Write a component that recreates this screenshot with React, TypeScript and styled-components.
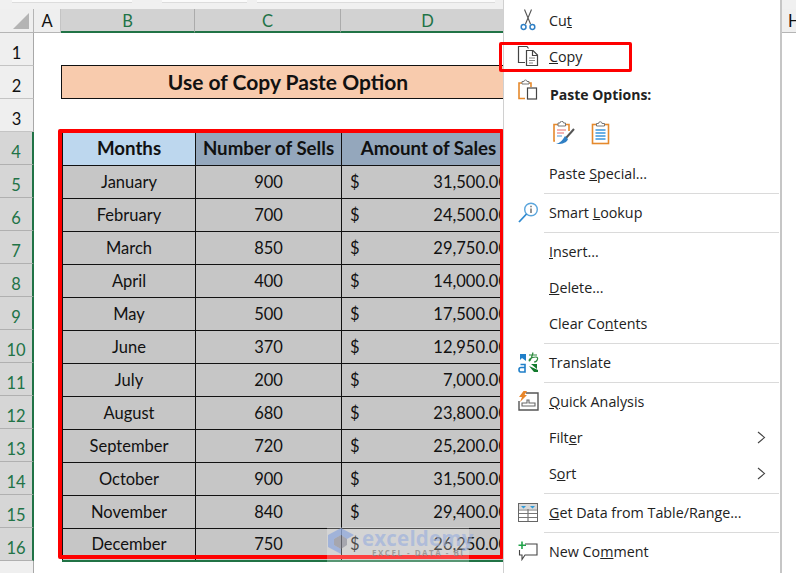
import styled, { createGlobalStyle } from 'styled-components';

const GlobalStyle = createGlobalStyle`
    html, body {
        margin: 0;
        padding: 0;
        background: #fff;
    }
`;

const Page = styled.div`
    position: relative;
    width: 796px;
    height: 573px;
    overflow: hidden;
    background: #fff;
    font-family: Lato, "Liberation Sans", sans-serif;
    color: #111;
`;

const TopStrip = styled.div`
    display: flex;
    height: 9px;
    background: #f0f0f0;
`;

const StripTab = styled.div<{ $left: number; $width: number }>`
    width: ${p => p.$width}px;
    height: 2px;
    margin-left: ${p => p.$left}px;
    background: #fafafa;
    border-bottom: 1px solid #dcdcdc;
`;

const ColumnBar = styled.div`
    display: flex;
    height: 24px;
`;

const Corner = styled.div`
    width: 34px;
    box-sizing: border-box;
    background: #efefef;
    border-right: 1px solid #b5b5b5;
    border-bottom: 1px solid #b5b5b5;
    display: flex;
    align-items: flex-end;
    justify-content: flex-end;
    padding: 0 4px 3px 0;
`;

const CornerMark = styled.div`
    width: 0;
    height: 0;
    border-style: solid;
    border-width: 0 0 16px 16px;
    border-color: transparent transparent #b4b4b4 transparent;
`;

const ColumnHead = styled.div<{ $width: number; $selected?: boolean }>`
    width: ${p => p.$width}px;
    flex: none;
    box-sizing: border-box;
    display: flex;
    align-items: center;
    justify-content: center;
    font-size: 16.5px;
    padding-top: 1px;
    background: ${p => (p.$selected ? '#d2d2d2' : '#efefef')};
    color: ${p => (p.$selected ? '#217346' : '#111')};
    border-right: 1px solid ${p => (p.$selected ? '#ababab' : '#c4c4c4')};
    border-bottom: ${p => (p.$selected ? '2px solid #217346' : '1px solid #b5b5b5')};
`;

const Body = styled.div`
    display: flex;
    height: 540px;
`;

const RowHeads = styled.div`
    width: 34px;
    flex: none;
    background: #efefef;
`;

const RowHead = styled.div<{ $selected?: boolean }>`
    height: 33px;
    box-sizing: border-box;
    display: flex;
    align-items: center;
    justify-content: center;
    font-size: 16.5px;
    padding-top: 8px;
    background: ${p => (p.$selected ? '#d6d6d6' : '#efefef')};
    color: ${p => (p.$selected ? '#217346' : '#111')};
    border-bottom: 1px solid ${p => (p.$selected ? '#b0b0b0' : '#c4c4c4')};
    border-right: ${p => (p.$selected ? '2px solid #217346' : '1px solid #a8a8a8')};
`;

const RowHeadRest = styled.div`
    height: 12px;
    box-sizing: border-box;
    border-right: 1px solid #a8a8a8;
`;

const Sheet = styled.div`
    flex: 1;
    padding: 32px 0 0 27px;
`;

const Title = styled.div`
    width: 454px;
    height: 34px;
    box-sizing: border-box;
    display: flex;
    align-items: center;
    justify-content: center;
    padding-bottom: 2px;
    background: #f8cbad;
    border: 1px solid #111;
    font-size: 21px;
    font-weight: 700;
`;

const Table = styled.table`
    margin: 33px 0 0 1px;
    width: 453px;
    table-layout: fixed;
    border-collapse: collapse;
    border-bottom: 2px solid #217346;
`;

const HeadCell = styled.th<{ $width: number; $tint: string }>`
    width: ${p => p.$width}px;
    height: 33px;
    padding: 0;
    box-sizing: border-box;
    background: ${p => p.$tint};
    border: 1px solid #111;
    border-top: 0;
    font-size: 18.7px;
    font-weight: 700;
    text-align: center;
`;

const Cell = styled.td`
    height: 33px;
    padding: 0;
    box-sizing: border-box;
    background: #c6c6c6;
    border: 1px solid #111;
    font-size: 16.5px;
    text-align: center;
`;

const Money = styled.div`
    display: flex;
    justify-content: space-between;
    padding: 0 7px 0 8px;
`;

const RedBox = styled.div`
    position: absolute;
    left: 58px;
    top: 129px;
    width: 446px;
    height: 430px;
    box-sizing: border-box;
    border: 4px solid #fe0000;
    border-radius: 2px;
`;

const Watermark = styled.div`
    position: absolute;
    left: 327px;
    top: 527px;
    width: 142px;
    height: 35px;
    display: flex;
    gap: 7px;
    box-sizing: border-box;
    background: rgba(255, 255, 255, 0.25);
`;

const MarkText = styled.div`
    display: flex;
    flex-direction: column;
    font-family: "Open Sans", sans-serif;
`;

const MarkName = styled.div`
    font-size: 20.5px;
    line-height: 22px;
    font-weight: 700;
    letter-spacing: 0.2px;
    color: rgba(150, 172, 222, 0.6);
`;

const MarkLine = styled.div`
    margin: -1px 0 0 10px;
    font-size: 8px;
    line-height: 10px;
    font-weight: 700;
    letter-spacing: 1.5px;
    white-space: nowrap;
    color: rgba(130, 130, 130, 0.7);
`;

const Menu = styled.div`
    position: absolute;
    left: 503px;
    top: 0;
    width: 279px;
    height: 573px;
    box-sizing: border-box;
    padding-top: 2px;
    background: #fff;
    border-left: 1px solid #d0d0d0;
    border-right: 2px solid #c6c6c6;
    font-family: "Open Sans", "Noto Sans", sans-serif;
    font-size: 14.3px;
    color: #222;
`;

const Item = styled.div`
    display: flex;
    align-items: center;
    height: 36px;
    padding-right: 14px;
`;

const IconSlot = styled.div`
    width: 22px;
    height: 22px;
    flex: none;
    margin: 0 10px 0 13px;
    display: flex;
    align-items: center;
    justify-content: center;
`;

const Label = styled.span`
    flex: 1;
    white-space: nowrap;
`;

const PasteHead = styled(Item)`
    height: 40px;
    padding-top: 1px;
    box-sizing: border-box;
    font-size: 14px;
    font-weight: 700;

    ${IconSlot} {
        margin-bottom: 10px;
    }

    ${Label} {
        margin-left: 1px;
    }
`;

const PasteIcons = styled.div`
    display: flex;
    align-items: center;
    gap: 16px;
    height: 37px;
    padding: 0 0 4px 49px;
`;

const Separator = styled.div`
    height: 1px;
    margin: 2px 1px 0 40px;
    background: #dadada;
`;

const CopyMark = styled.div`
    position: absolute;
    left: 499px;
    top: 42px;
    width: 133px;
    height: 30px;
    box-sizing: border-box;
    border: 3px solid #fe0000;
    border-radius: 2px;
`;

const HeadRight = styled.div`
    position: absolute;
    left: 782px;
    top: 9px;
    width: 14px;
    height: 24px;
    box-sizing: border-box;
    overflow: hidden;
    background: #efefef;
    border-bottom: 1px solid #b5b5b5;
    padding-left: 6px;
    font-size: 16.5px;
    line-height: 25px;
`;

const months: [string, string, string][] = [
    ['January', '900', '31,500.00'],
    ['February', '700', '24,500.00'],
    ['March', '850', '29,750.00'],
    ['April', '400', '14,000.00'],
    ['May', '500', '17,500.00'],
    ['June', '370', '12,950.00'],
    ['July', '200', '7,000.00'],
    ['August', '680', '23,800.00'],
    ['September', '720', '25,200.00'],
    ['October', '900', '31,500.00'],
    ['November', '840', '29,400.00'],
    ['December', '750', '26,250.00'],
];

const rowNumbers = Array.from({ length: 16 }, (_, i) => i + 1);

function Scissors() {
    return (
        <svg width="16" height="22" viewBox="0 0 16 22" fill="none">
            <path d="M4.5 0.5 L10.5 15 M11.5 0.5 L5.5 15" stroke="#555" strokeWidth="1.1" />
            <circle cx="3.6" cy="18" r="2.4" stroke="#2f7fc4" strokeWidth="1.5" />
            <circle cx="12.4" cy="18" r="2.4" stroke="#2f7fc4" strokeWidth="1.5" />
        </svg>
    );
}

function CopyIcon() {
    return (
        <svg width="22" height="22" viewBox="0 0 22 22" fill="none" stroke="#444" strokeWidth="1.2">
            <path d="M8 17.5 H1.5 V1.5 H10 L11.5 3.5" />
            <path d="M9.5 5.5 H16 L20.5 10 V20.5 H9.5 Z" fill="#fff" />
            <path d="M15.5 5.5 V10.5 H20.5" />
            <path d="M12 13 H18 M12 15.5 H18 M12 18 H16" stroke="#888" strokeWidth="1" />
        </svg>
    );
}

function PasteIcon() {
    return (
        <svg width="20" height="22" viewBox="0 0 20 22" fill="none">
            <path d="M7 19.5 H1 V4 H13 V8" stroke="#e5892c" strokeWidth="1.6" />
            <path d="M4 5 V2.5 H6 A1.2 1.2 0 0 1 9 2.5 H11 V5 Z" fill="#fff" stroke="#777" strokeWidth="1" />
            <rect x="9.5" y="9" width="9" height="11" fill="#fff" stroke="#444" strokeWidth="1.2" />
        </svg>
    );
}

function PasteFormatIcon() {
    return (
        <svg width="22" height="24" viewBox="0 0 22 24" fill="none">
            <path d="M2 20 H1 V3.5 H16 V10" stroke="#e5892c" strokeWidth="1.6" />
            <path d="M5 5 V2 H7 A1.5 1.5 0 0 1 10.5 2 H12.5 V5 Z" fill="#fff" stroke="#777" strokeWidth="1" />
            <path d="M4 9 H13 M4 12 H11" stroke="#e86a6a" strokeWidth="1.2" />
            <path d="M4 15 H9" stroke="#6fa8dc" strokeWidth="1.2" />
            <path d="M21 8 L13 17" stroke="#555" strokeWidth="2" />
            <path d="M12 15 L15 18 C14 22 8 23.5 3 23 C7 22 9 20 12 15 Z" fill="#2f7fc4" />
        </svg>
    );
}

function PasteValuesIcon() {
    return (
        <svg width="20" height="24" viewBox="0 0 20 24" fill="none">
            <rect x="1.5" y="3.5" width="16" height="19" fill="#fff" stroke="#e5892c" strokeWidth="1.6" />
            <path d="M5.5 5 V2.5 H7.5 A1.5 1.5 0 0 1 11 2.5 H13.5 V5 Z" fill="#fff" stroke="#777" strokeWidth="1" />
            <path d="M4.5 9 H14.5 M4.5 12 H14.5 M4.5 15 H14.5 M4.5 18 H14.5" stroke="#3a96dd" strokeWidth="1.3" />
        </svg>
    );
}

function LookupIcon() {
    return (
        <svg width="21" height="21" viewBox="0 0 21 21" fill="none">
            <circle cx="13" cy="7.5" r="6.3" stroke="#5aa5dc" strokeWidth="1.4" />
            <path d="M8.5 12 L1 20" stroke="#2f8ad0" strokeWidth="1.8" />
            <path d="M13 6.5 V11 M13 3.8 V5.2" stroke="#666" strokeWidth="1.4" />
        </svg>
    );
}

function TranslateIcon() {
    return (
        <svg width="21" height="21" viewBox="0 0 21 21" fill="none">
            <path d="M8 2 L2 2 L2 8 L4 6 L8 9 Z" fill="#1f7fc9" />
            <path d="M2.5 12.5 H7 V20 H2.5 Q1 20 1 17.5 Q1 15.5 3 15.5 H7" stroke="#1f7fc9" strokeWidth="1.6" />
            <path d="M11 3 H19 M15 0.5 C14 5 12 9 11.5 9 C10.5 9 11.5 5 18 5 C21 5 19.5 10 16 10" stroke="#2d8a3e" strokeWidth="1.2" />
            <path d="M13 12 L19 17 V12 Z M11 14 L16 20 H20 L20 18 Z" fill="#137a2d" />
        </svg>
    );
}

function QuickIcon() {
    return (
        <svg width="21" height="20" viewBox="0 0 21 20" fill="none">
            <path d="M8 2 H20 V19 H1 V10" stroke="#555" strokeWidth="1.4" />
            <path d="M4 15 V12 H9 V9 H11 V12 H17 V15 Z" fill="#fff" stroke="#666" strokeWidth="1.1" />
            <path d="M5.5 0 H9 L6.5 4 H9 L2 11 L4 6 H1 Z" fill="#e8862a" />
        </svg>
    );
}

function TableIcon() {
    return (
        <svg width="20" height="19" viewBox="0 0 20 19">
            <rect x="0.5" y="0.5" width="19" height="18" fill="#fff" stroke="#666" />
            <rect x="1" y="1" width="18" height="5" fill="#d8d8d8" />
            <path d="M3 3 H8 L5.5 5.5 Z M12 3 H17 L14.5 5.5 Z" fill="#2e9ad8" />
            <path d="M1 7 H19 M1 10.5 H19 M1 14.5 H19 M10 6 V18" stroke="#777" strokeWidth="1.2" />
        </svg>
    );
}

function CommentIcon() {
    return (
        <svg width="20" height="20" viewBox="0 0 20 20" fill="none">
            <path d="M7 3 H19 V14 H7 L4 18.5 V14 H1.5 V9" stroke="#444" strokeWidth="1.1" />
            <path d="M4 0.5 V8 M0.5 4.2 H8" stroke="#21a34a" strokeWidth="1.6" />
        </svg>
    );
}

function Chevron() {
    return (
        <svg width="9" height="13" viewBox="0 0 9 13" fill="none">
            <path d="M1 1 L7.5 6.5 L1 12" stroke="#444" strokeWidth="1.1" />
        </svg>
    );
}

function LogoMark() {
    return (
        <svg width="28" height="28" viewBox="0 0 28 28" style={{ flex: 'none' }}>
            <path d="M14 1 L27 8 L20 12 L14 8 L7 12 V18 L14 22 V27 L1 20 V8 Z" fill="rgba(140,165,220,0.7)" />
            <path d="M14 8 L20 12 V18 L14 22 L7 18 V12 Z" fill="rgba(120,120,135,0.5)" />
        </svg>
    );
}

export default function App() {
    return (
        <Page>
            <GlobalStyle />
            <TopStrip>
                <StripTab $left={12} $width={120} />
                <StripTab $left={30} $width={85} />
                <StripTab $left={10} $width={238} />
            </TopStrip>
            <ColumnBar>
                <Corner><CornerMark /></Corner>
                <ColumnHead $width={27}>A</ColumnHead>
                <ColumnHead $width={134} $selected>B</ColumnHead>
                <ColumnHead $width={146} $selected>C</ColumnHead>
                <ColumnHead $width={174} $selected>D</ColumnHead>
            </ColumnBar>
            <Body>
                <RowHeads>
                    {rowNumbers.map(n => (
                        <RowHead key={n} $selected={n >= 4}>{n}</RowHead>
                    ))}
                    <RowHeadRest />
                </RowHeads>
                <Sheet>
                    <Title>Use of Copy Paste Option</Title>
                    <Table>
                        <thead>
                            <tr>
                                <HeadCell $width={133} $tint="#bdd7ee">Months</HeadCell>
                                <HeadCell $width={146} $tint="#94a7bc">Number of Sells</HeadCell>
                                <HeadCell $width={174} $tint="#94a7bc">Amount of Sales</HeadCell>
                            </tr>
                        </thead>
                        <tbody>
                            {months.map(([month, sells, amount]) => (
                                <tr key={month}>
                                    <Cell>{month}</Cell>
                                    <Cell>{sells}</Cell>
                                    <Cell>
                                        <Money><span>$</span><span>{amount}</span></Money>
                                    </Cell>
                                </tr>
                            ))}
                        </tbody>
                    </Table>
                </Sheet>
            </Body>

            <RedBox />
            <Watermark>
                <LogoMark />
                <MarkText>
                    <MarkName>exceldemy</MarkName>
                    <MarkLine>EXCEL - DATA - BI</MarkLine>
                </MarkText>
            </Watermark>

            <HeadRight>H</HeadRight>
            <Menu>
                <Item>
                    <IconSlot><Scissors /></IconSlot>
                    <Label>Cu<u>t</u></Label>
                </Item>
                <Item>
                    <IconSlot><CopyIcon /></IconSlot>
                    <Label><u>C</u>opy</Label>
                </Item>
                <PasteHead>
                    <IconSlot><PasteIcon /></IconSlot>
                    <Label>Paste Options:</Label>
                </PasteHead>
                <PasteIcons>
                    <PasteFormatIcon />
                    <PasteValuesIcon />
                </PasteIcons>
                <Item>
                    <IconSlot />
                    <Label>Paste <u>S</u>pecial...</Label>
                </Item>
                <Separator />
                <Item>
                    <IconSlot><LookupIcon /></IconSlot>
                    <Label>Smart <u>L</u>ookup</Label>
                </Item>
                <Separator />
                <Item>
                    <IconSlot />
                    <Label><u>I</u>nsert...</Label>
                </Item>
                <Item>
                    <IconSlot />
                    <Label><u>D</u>elete...</Label>
                </Item>
                <Item>
                    <IconSlot />
                    <Label>Clear Co<u>n</u>tents</Label>
                </Item>
                <Separator />
                <Item>
                    <IconSlot><TranslateIcon /></IconSlot>
                    <Label>Translate</Label>
                </Item>
                <Separator />
                <Item>
                    <IconSlot><QuickIcon /></IconSlot>
                    <Label><u>Q</u>uick Analysis</Label>
                </Item>
                <Item>
                    <IconSlot />
                    <Label>Filt<u>e</u>r</Label>
                    <Chevron />
                </Item>
                <Item>
                    <IconSlot />
                    <Label>S<u>o</u>rt</Label>
                    <Chevron />
                </Item>
                <Separator />
                <Item>
                    <IconSlot><TableIcon /></IconSlot>
                    <Label><u>G</u>et Data from Table/Range...</Label>
                </Item>
                <Separator />
                <Item>
                    <IconSlot><CommentIcon /></IconSlot>
                    <Label>New Co<u>m</u>ment</Label>
                </Item>
            </Menu>
            <CopyMark />
        </Page>
    );
}
